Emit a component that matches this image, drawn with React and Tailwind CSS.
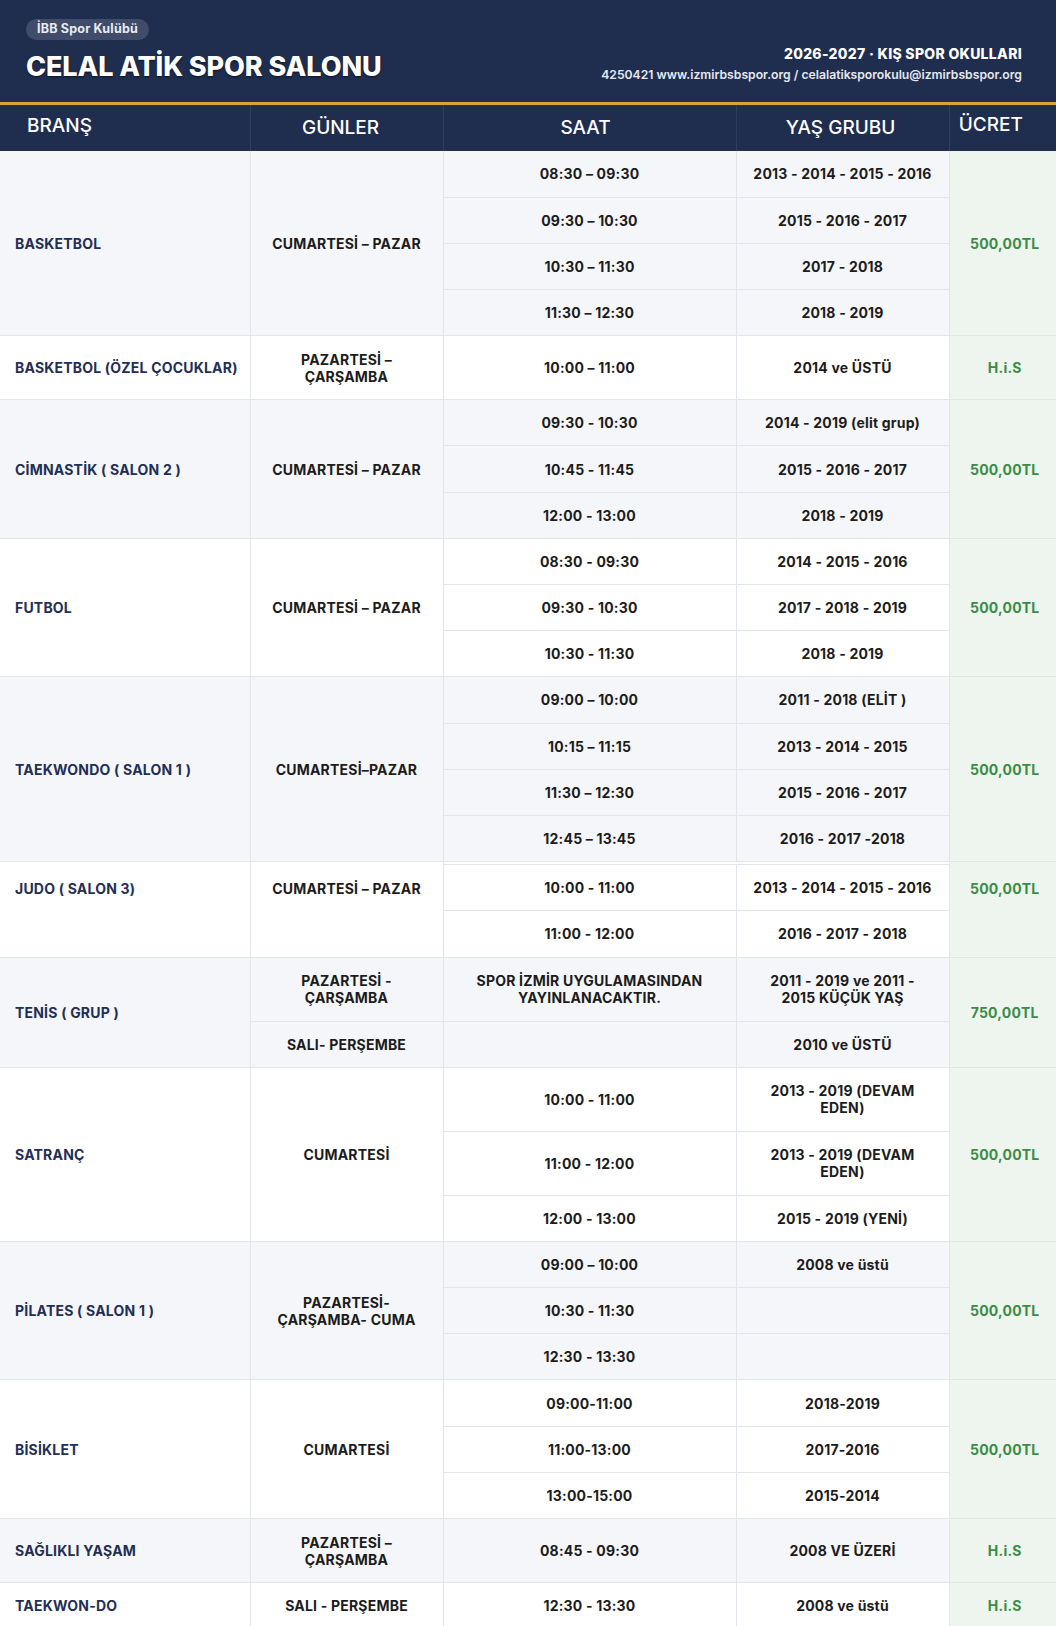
import React from "react";

const FONT = { fontFamily: 'Inter, "Noto Sans", "Liberation Sans", sans-serif' };

const base = "border-b border-r border-[#e2e5ea] text-[14px] tracking-[0.2px] font-bold leading-[17px] align-middle";
const bransC = base + " pl-[15px] pr-1 text-left text-[#1f2f55]";
const midC = base + " px-1 text-center text-[#1c1c1c]";
const ucretC = "border-b border-[#e2e5ea] text-[14px] tracking-[0.2px] font-bold leading-[17px] align-middle text-center bg-[#edf5ee] text-[#3b8c47] pl-1";

const S = "h-[46.2px]";
const D = "h-[64px]";

function Grp({ bg, brans, gunler, ucret, rows }) {
  const n = rows.length;
  return (
    <>
      {rows.map((r, i) => (
        <tr key={i} className={(r[2] ? D : S) + " " + bg}>
          {i === 0 && (
            <td rowSpan={n} className={bransC}>
              {brans}
            </td>
          )}
          {i === 0 && (
            <td rowSpan={n} className={midC}>
              {gunler}
            </td>
          )}
          <td className={midC}>{r[0]}</td>
          <td className={midC}>{r[1]}</td>
          {i === 0 && (
            <td rowSpan={n} className={ucretC}>
              {ucret}
            </td>
          )}
        </tr>
      ))}
    </>
  );
}

export default function App() {
  const gray = "bg-[#f5f6f9]";
  const white = "bg-white";
  return (
    <div className="w-[1056px] bg-white" style={FONT}>
      {/* Top header */}
      <div className="bg-[#1f2d4f] h-[102px] flex justify-between px-[26px] pt-[19px]">
        <div className="flex flex-col">
          <div className="self-start rounded-full bg-white/15 h-[21px] px-[11px] flex items-center text-[12.5px] font-bold text-[#e8ebf2] tracking-[0.2px]">
            İBB Spor Kulübü
          </div>
          <div className="mt-[10px] text-[27px] leading-[33px] font-extrabold text-white tracking-[-0.1px] [text-shadow:0_1px_2px_rgba(0,0,0,0.6)]">
            CELAL ATİK SPOR SALONU
          </div>
        </div>
        <div className="flex flex-col items-end pt-[26px] pr-[8px]">
          <div className="text-[14px] leading-[18px] font-extrabold text-white tracking-[0.3px]">
            2026-2027 · KIŞ SPOR OKULLARI
          </div>
          <div className="mt-[4px] text-[12.2px] leading-[16px] font-semibold text-[#e6e9f0]">
            4250421 www.izmirbsbspor.org / celalatiksporokulu@izmirbsbspor.org
          </div>
        </div>
      </div>
      <div className="h-[3px] bg-[#d4a734]" />

      <table className="w-[1056px] table-fixed border-collapse">
        <colgroup>
          <col className="w-[250px]" />
          <col className="w-[193px]" />
          <col className="w-[293px]" />
          <col className="w-[213px]" />
          <col className="w-[107px]" />
        </colgroup>
        <thead>
          <tr className="h-[46px] bg-[#1f2d4f] text-white text-[19px]">
            <th className="border-r border-[#2e3c5e] text-left pl-[27px] pb-[4px] font-medium">BRANŞ</th>
            <th className="border-r border-[#2e3c5e] text-center pr-[12px] font-medium">GÜNLER</th>
            <th className="border-r border-[#2e3c5e] text-center pr-[8px] font-medium">SAAT</th>
            <th className="border-r border-[#2e3c5e] text-center pr-[4px] font-medium">YAŞ GRUBU</th>
            <th className="text-center pr-[24px] pb-[6px] font-medium">ÜCRET</th>
          </tr>
        </thead>
        <tbody>
          <Grp
            bg={gray}
            brans="BASKETBOL"
            gunler="CUMARTESİ – PAZAR"
            ucret="500,00TL"
            rows={[
              ["08:30 – 09:30", "2013 - 2014 - 2015 - 2016"],
              ["09:30 – 10:30", "2015 - 2016 - 2017"],
              ["10:30 – 11:30", "2017 - 2018"],
              ["11:30 – 12:30", "2018 - 2019"],
            ]}
          />
          <Grp
            bg={white}
            brans="BASKETBOL (ÖZEL ÇOCUKLAR)"
            gunler={<>PAZARTESİ –<br />ÇARŞAMBA</>}
            ucret="H.i.S"
            rows={[["10:00 – 11:00", "2014 ve ÜSTÜ", true]]}
          />
          <Grp
            bg={gray}
            brans="CİMNASTİK ( SALON 2 )"
            gunler="CUMARTESİ – PAZAR"
            ucret="500,00TL"
            rows={[
              ["09:30 - 10:30", "2014 - 2019 (elit grup)"],
              ["10:45 - 11:45", "2015 - 2016 - 2017"],
              ["12:00 - 13:00", "2018 - 2019"],
            ]}
          />
          <Grp
            bg={white}
            brans="FUTBOL"
            gunler="CUMARTESİ – PAZAR"
            ucret="500,00TL"
            rows={[
              ["08:30 - 09:30", "2014 - 2015 - 2016"],
              ["09:30 - 10:30", "2017 - 2018 - 2019"],
              ["10:30 - 11:30", "2018 - 2019"],
            ]}
          />
          <Grp
            bg={gray}
            brans="TAEKWONDO ( SALON 1 )"
            gunler="CUMARTESİ–PAZAR"
            ucret="500,00TL"
            rows={[
              ["09:00 – 10:00", "2011 - 2018 (ELİT )"],
              ["10:15 – 11:15", "2013 - 2014 - 2015"],
              ["11:30 – 12:30", "2015 - 2016 - 2017"],
              ["12:45 – 13:45", "2016 - 2017 -2018"],
            ]}
          />

          {/* JUDO */}
          <tr className="h-[3px] bg-white">
            <td rowSpan={3} className={bransC + " !align-top pt-[18px]"}>JUDO ( SALON 3)</td>
            <td rowSpan={3} className={midC + " !align-top pt-[18px]"}>CUMARTESİ – PAZAR</td>
            <td colSpan={2} className="p-0 h-[3px] border-b border-[#e2e5ea]"></td>
            <td rowSpan={3} className={ucretC + " !align-top pt-[18px]"}>500,00TL</td>
          </tr>
          <tr className={S + " bg-white"}>
            <td className={midC}>10:00 - 11:00</td>
            <td className={midC}>2013 - 2014 - 2015 - 2016</td>
          </tr>
          <tr className={S + " bg-white"}>
            <td className={midC}>11:00 - 12:00</td>
            <td className={midC}>2016 - 2017 - 2018</td>
          </tr>

          {/* TENIS */}
          <tr className={D + " " + gray}>
            <td rowSpan={2} className={bransC}>TENİS ( GRUP )</td>
            <td className={midC}>PAZARTESİ -<br />ÇARŞAMBA</td>
            <td className={midC}>SPOR İZMİR UYGULAMASINDAN<br />YAYINLANACAKTIR.</td>
            <td className={midC}>2011 - 2019 ve 2011 -<br />2015 KÜÇÜK YAŞ</td>
            <td rowSpan={2} className={ucretC}>750,00TL</td>
          </tr>
          <tr className={S + " " + gray}>
            <td className={midC}>SALI- PERŞEMBE</td>
            <td className={midC}></td>
            <td className={midC}>2010 ve ÜSTÜ</td>
          </tr>

          <Grp
            bg={white}
            brans="SATRANÇ"
            gunler="CUMARTESİ"
            ucret="500,00TL"
            rows={[
              ["10:00 - 11:00", <>2013 - 2019 (DEVAM<br />EDEN)</>, true],
              ["11:00 - 12:00", <>2013 - 2019 (DEVAM<br />EDEN)</>, true],
              ["12:00 - 13:00", "2015 - 2019 (YENİ)"],
            ]}
          />
          <Grp
            bg={gray}
            brans="PİLATES ( SALON 1 )"
            gunler={<>PAZARTESİ-<br />ÇARŞAMBA- CUMA</>}
            ucret="500,00TL"
            rows={[
              ["09:00 – 10:00", "2008 ve üstü"],
              ["10:30 - 11:30", ""],
              ["12:30 - 13:30", ""],
            ]}
          />
          <Grp
            bg={white}
            brans="BİSİKLET"
            gunler="CUMARTESİ"
            ucret="500,00TL"
            rows={[
              ["09:00-11:00", "2018-2019"],
              ["11:00-13:00", "2017-2016"],
              ["13:00-15:00", "2015-2014"],
            ]}
          />
          <Grp
            bg={gray}
            brans="SAĞLIKLI YAŞAM"
            gunler={<>PAZARTESİ –<br />ÇARŞAMBA</>}
            ucret="H.i.S"
            rows={[["08:45 - 09:30", "2008 VE ÜZERİ", true]]}
          />
          <Grp
            bg={white}
            brans="TAEKWON-DO"
            gunler="SALI - PERŞEMBE"
            ucret="H.i.S"
            rows={[["12:30 - 13:30", "2008 ve üstü"]]}
          />
        </tbody>
      </table>
    </div>
  );
}
